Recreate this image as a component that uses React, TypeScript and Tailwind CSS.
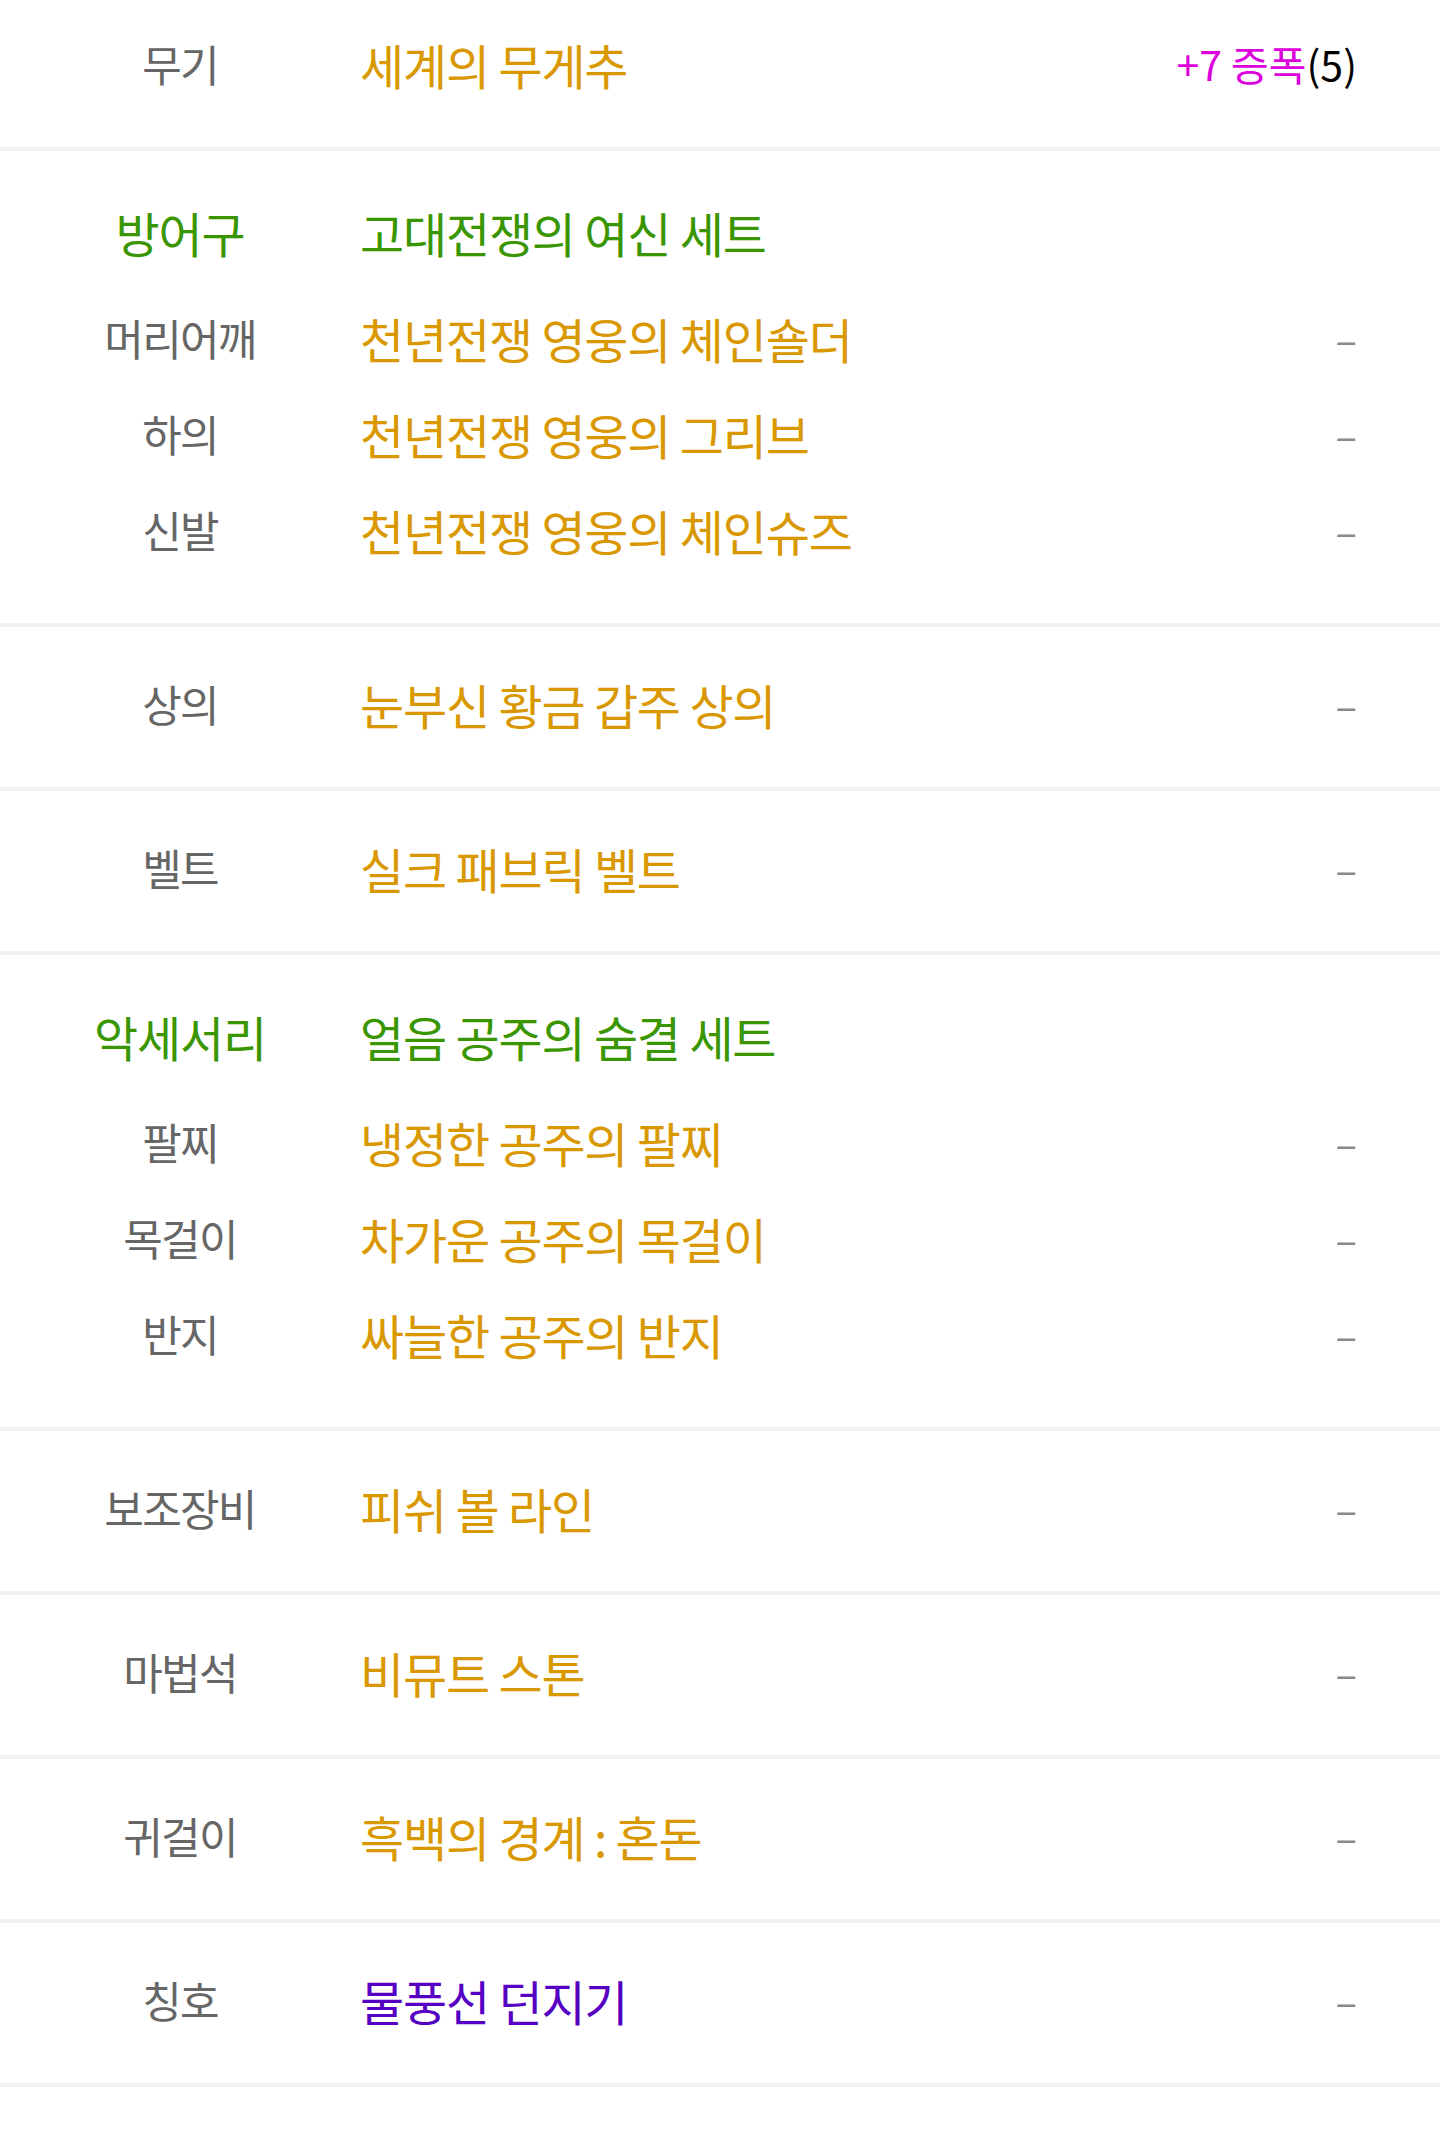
import clsx from 'clsx';

type Tono = 'dorado' | 'morado';

interface Pieza {
  parte: string;
  nombre: string;
  tono?: Tono;
  extra?: 'amplificacion';
}

interface Bloque {
  tipo: 'fila' | 'set';
  pieza?: Pieza;
  titulo?: string;
  setNombre?: string;
  piezas?: Pieza[];
}

const bloques: Bloque[] = [
  { tipo: 'fila', pieza: { parte: '무기', nombre: '세계의 무게추', extra: 'amplificacion' } },
  {
    tipo: 'set',
    titulo: '방어구',
    setNombre: '고대전쟁의 여신 세트',
    piezas: [
      { parte: '머리어깨', nombre: '천년전쟁 영웅의 체인숄더' },
      { parte: '하의', nombre: '천년전쟁 영웅의 그리브' },
      { parte: '신발', nombre: '천년전쟁 영웅의 체인슈즈' },
    ],
  },
  { tipo: 'fila', pieza: { parte: '상의', nombre: '눈부신 황금 갑주 상의' } },
  { tipo: 'fila', pieza: { parte: '벨트', nombre: '실크 패브릭 벨트' } },
  {
    tipo: 'set',
    titulo: '악세서리',
    setNombre: '얼음 공주의 숨결 세트',
    piezas: [
      { parte: '팔찌', nombre: '냉정한 공주의 팔찌' },
      { parte: '목걸이', nombre: '차가운 공주의 목걸이' },
      { parte: '반지', nombre: '싸늘한 공주의 반지' },
    ],
  },
  { tipo: 'fila', pieza: { parte: '보조장비', nombre: '피쉬 볼 라인' } },
  { tipo: 'fila', pieza: { parte: '마법석', nombre: '비뮤트 스톤' } },
  { tipo: 'fila', pieza: { parte: '귀걸이', nombre: '흑백의 경계 : 혼돈' } },
  { tipo: 'fila', pieza: { parte: '칭호', nombre: '물풍선 던지기', tono: 'morado' } },
];

const fuente = "font-['Noto_Sans_CJK_KR','Noto_Sans',sans-serif]";

function Lado({ extra }: { extra?: Pieza['extra'] }) {
  if (extra === 'amplificacion') {
    return (
      <span className="text-[41px] whitespace-nowrap">
        <span className="text-[#dc00dc]">+7 증폭</span>
        <span className="text-black">(5)</span>
      </span>
    );
  }
  return <span className="text-[40px] text-[#8a8a8a]">–</span>;
}

function Linea({ pieza }: { pieza: Pieza }) {
  return (
    <div className="flex items-center h-[96px] pr-[83px] pb-[7px]">
      <div className="w-[360px] text-center text-[43px] tracking-[-0.04em] text-[#666666]">
        {pieza.parte}
      </div>
      <div
        className={clsx(
          'flex-1 text-[48px] tracking-[-0.025em]',
          pieza.tono === 'morado' ? 'text-[#5500c3]' : 'text-[#d99800]'
        )}
      >
        {pieza.nombre}
      </div>
      <Lado extra={pieza.extra} />
    </div>
  );
}

export default function App() {
  return (
    <div className={clsx('w-[1440px] bg-white overflow-hidden h-[2141px]', fuente)}>
      <div className="-mt-[13px]">
        {bloques.map((bloque, i) =>
          bloque.tipo === 'fila' && bloque.pieza ? (
            <div key={i} className="h-[164px] flex items-center border-b-4 border-[#f1f1f1]">
              <div className="w-full">
                <Linea pieza={bloque.pieza} />
              </div>
            </div>
          ) : (
            <div key={i} className="h-[476px] pt-[35px] border-b-4 border-[#f1f1f1]">
              <div className="flex items-center h-[96px] pb-[5px] text-[#3a9600] text-[48px] tracking-[-0.025em]">
                <div className="w-[360px] text-center">{bloque.titulo}</div>
                <div className="flex-1">{bloque.setNombre}</div>
              </div>
              <div className="mt-[11px]">
                {bloque.piezas?.map((p) => (
                  <Linea key={p.parte} pieza={p} />
                ))}
              </div>
            </div>
          )
        )}
      </div>
    </div>
  );
}
